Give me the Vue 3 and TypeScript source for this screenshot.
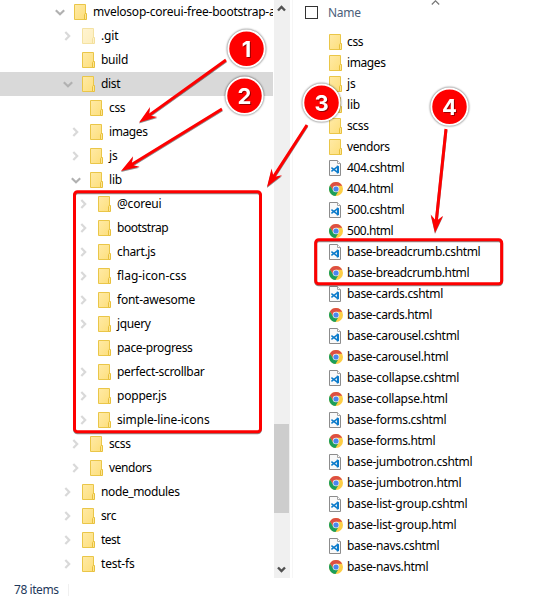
<script setup lang="ts">
type Chevron = 'open' | 'closed' | 'none'

interface TreeNode {
  name: string
  width: number
  level: number
  chevron: Chevron
  faded?: boolean
  selected?: boolean
}

interface FileEntry {
  name: string
  width: number
  kind: 'folder' | 'code' | 'chrome'
}

interface Callout {
  label: number
  x: number
  y: number
  from: [number, number]
  tip: [number, number]
}

const node = (name: string, width: number, level: number, chevron: Chevron = 'closed'): TreeNode => ({
  name,
  width,
  level,
  chevron,
})

const tree: TreeNode[] = [
  node('mvelosop-coreui-free-bootstrap-a', 182.5, 0, 'open'),
  { ...node('.git', 17.5, 1), faded: true },
  node('build', 27, 1, 'none'),
  { ...node('dist', 19.3, 1, 'open'), selected: true },
  node('css', 16.3, 2, 'none'),
  node('images', 38.5, 2),
  node('js', 8.5, 2),
  node('lib', 13, 2, 'open'),
  node('@coreui', 44.5, 3),
  node('bootstrap', 51.3, 3),
  node('chart.js', 38.5, 3),
  node('flag-icon-css', 69.5, 3),
  node('font-awesome', 78, 3),
  node('jquery', 33.5, 3),
  node('pace-progress', 75.5, 3, 'none'),
  node('perfect-scrollbar', 87.5, 3),
  node('popper.js', 49.5, 3),
  node('simple-line-icons', 92.5, 3),
  node('scss', 21.5, 2),
  node('vendors', 42.5, 2),
  node('node_modules', 78.5, 1),
  node('src', 15, 1),
  node('test', 19, 1),
  node('test-fs', 33.5, 1),
]

const folders: [string, number][] = [
  ['css', 16.3], ['images', 38.5], ['js', 8.5], ['lib', 13], ['scss', 21.5], ['vendors', 42.5],
]
const pages: [string, number, number][] = [
  ['404', 57.3, 46.2],
  ['500', 57.3, 46.2],
  ['base-breadcrumb', 133.3, 122.2],
  ['base-cards', 96, 85],
  ['base-carousel', 112.3, 101.3],
  ['base-collapse', 112, 100.5],
  ['base-forms', 99.3, 88.3],
  ['base-jumbotron', 125.3, 114.3],
  ['base-list-group', 120.3, 109.3],
  ['base-navs', 92.3, 81.3],
]

const files: FileEntry[] = [
  ...folders.map(([name, width]): FileEntry => ({ name, width, kind: 'folder' })),
  ...pages.flatMap(([page, codeWidth, htmlWidth]): FileEntry[] => [
    { name: `${page}.cshtml`, width: codeWidth, kind: 'code' },
    { name: `${page}.html`, width: htmlWidth, kind: 'chrome' },
  ]),
]

const callouts: Callout[] = [
  { label: 1, x: 246.5, y: 48.7, from: [226, 60], tip: [139, 122.5] },
  { label: 2, x: 244.5, y: 95.7, from: [222, 109], tip: [121, 171] },
  { label: 3, x: 321.5, y: 102.7, from: [307, 125], tip: [267, 187] },
  { label: 4, x: 449.5, y: 106.7, from: [446, 129], tip: [435, 233] },
]

const ruler = document.createElement('canvas').getContext('2d')!
ruler.font = '12px "Noto Sans", "Open Sans", sans-serif'
const tracking = (text: string, width: number) => ({
  letterSpacing: `${((width - ruler.measureText(text).width) / text.length).toFixed(3)}px`,
})

const angle = (c: Callout) => (Math.atan2(c.tip[1] - c.from[1], c.tip[0] - c.from[0]) * 180) / Math.PI
const reach = (c: Callout) => Math.hypot(c.tip[0] - c.from[0], c.tip[1] - c.from[1])
</script>

<template>
  <div class="explorer">
    <svg class="defs" width="0" height="0">
      <defs>
        <linearGradient id="paper" x1="0" y1="0" x2="1" y2="1">
          <stop offset="0" stop-color="#ffeaa6" />
          <stop offset="1" stop-color="#fddf7c" />
        </linearGradient>
        <symbol id="folder" viewBox="0 0 14 16">
          <path d="M.5 .5H11.5V15.5H.5z" fill="url(#paper)" stroke="#eac648" />
          <path d="M10.5 15.5V10.5L11.2 9.5H12.5V15.5z" fill="#fde694" stroke="#e8c03c" />
        </symbol>
        <symbol id="code" viewBox="0 0 14 16">
          <path d="M.5 .5H8.5L11.5 3.5V15.5H.5z" fill="#f9f9f9" stroke="#8c8c8c" />
          <path d="M8.5 .5V3.5H11.5" fill="#fff" stroke="#a4a4a4" />
          <path d="M2.4 7.7L8.6 12.3M2.4 11.3L8.6 6.7" fill="none" stroke="#0b7bcb" stroke-width="1.5" />
          <path d="M7.9 5.3L10 6.2V12.9L7.9 13.8z" fill="#0b7bcb" />
        </symbol>
        <symbol id="chrome" viewBox="0 0 14 14">
          <circle cx="7" cy="7" r="7" fill="#fdce45" />
          <path d="M7 3.8H13.2A7 7 0 0 0 .94 3.5L4.2 8.6z" fill="#dd4f43" />
          <path d="M.94 3.5A7 7 0 0 0 6.5 14L9.8 8.6L7 10.2L4.2 8.6z" fill="#1b9e5a" />
          <circle cx="7" cy="7" r="3.3" fill="#f1f1f1" />
          <circle cx="7" cy="7" r="2.6" fill="#4a86ee" />
        </symbol>
      </defs>
    </svg>

    <main class="panes">
      <nav class="tree">
        <div
          v-for="(item, i) in tree"
          :key="i"
          class="tree-row"
          :class="[`level-${item.level}`, { selected: item.selected }]"
        >
          <span class="toggle">
            <svg v-if="item.chevron === 'open'" width="10" height="7" viewBox="0 0 10 7">
              <path d="M.8 1.3L5 5.2L9.2 1.3" fill="none" stroke="#b1b1b1" stroke-width="2.2" />
            </svg>
            <svg v-else-if="item.chevron === 'closed'" width="7" height="10" viewBox="0 0 7 10">
              <path d="M1.3 1L5.2 5L1.3 9" fill="none" stroke="#d9d9d9" stroke-width="2.2" />
            </svg>
          </span>
          <svg class="folder" :class="{ faded: item.faded }" width="14" height="16"><use href="#folder" /></svg>
          <span class="label" :style="tracking(item.name, item.width)">{{ item.name }}</span>
        </div>
      </nav>

      <div class="scrollbar">
        <svg class="arrow-up" width="9" height="7" viewBox="0 0 9 7">
          <path d="M1 5.5L4.5 2L8 5.5" fill="none" stroke="#505050" stroke-width="2.4" />
        </svg>
        <div class="thumb"></div>
        <svg class="arrow-down" width="9" height="7" viewBox="0 0 9 7">
          <path d="M1 1.5L4.5 5L8 1.5" fill="none" stroke="#505050" stroke-width="2.4" />
        </svg>
      </div>

      <section class="list">
        <header class="list-head">
          <span class="checkbox"></span>
          <span class="column" :style="tracking('Name', 32.8)">Name</span>
          <svg class="sort" width="9" height="6" viewBox="0 0 9 6">
            <path d="M.8 4.5L4.5 .8L8.2 4.5" fill="none" stroke="#777" stroke-width="1.2" />
          </svg>
        </header>
        <div v-for="file in files" :key="file.name" class="file-row">
          <svg v-if="file.kind === 'chrome'" class="chrome" width="14" height="14"><use href="#chrome" /></svg>
          <svg v-else width="14" height="16"><use :href="`#${file.kind}`" /></svg>
          <span class="label" :style="tracking(file.name, file.width)">{{ file.name }}</span>
        </div>
      </section>
    </main>

    <footer class="status"><span class="count" :style="tracking('78 items', 44.5)">78 items</span></footer>

    <svg class="annotations" width="533" height="601" viewBox="0 0 533 601">
      <g class="marks" fill="none" stroke="#fe0000" stroke-width="3">
        <rect x="74.5" y="191.7" width="186" height="240" rx="3" />
        <rect x="315.7" y="239.7" width="186" height="44" rx="3" />
      </g>
      <g v-for="c in callouts" :key="c.label">
        <g class="marks">
          <g :transform="`translate(${c.tip[0]} ${c.tip[1]}) rotate(${angle(c)})`" fill="#fe0000">
            <path :d="`M${-reach(c)} -1.5H-13.5L-18 -6.2L0 0L-18 6.2L-13.5 1.5H${-reach(c)}z`" />
          </g>
        </g>
        <circle class="disc" :cx="c.x" :cy="c.y" r="18.2" fill="#fe0000" stroke="#fff" stroke-width="1.9" />
        <text class="digit" :x="c.x" :y="c.y + 7.9">{{ c.label }}</text>
      </g>
    </svg>
  </div>
</template>

<style>
body {
  margin: 0;
  background: #fff;
}
</style>

<style scoped>
.explorer {
  position: relative;
  width: 533px;
  height: 601px;
  overflow: hidden;
  display: flex;
  flex-direction: column;
  background: #fff;
  color: #000;
  font: 12px/20px "Noto Sans", "Open Sans", sans-serif;
}
svg {
  display: block;
  flex: none;
}
.defs {
  position: absolute;
}
.panes {
  display: flex;
  height: 578px;
}
.tree {
  width: 273px;
  margin-right: 1px;
  overflow: hidden;
}
.tree-row {
  height: 24px;
  display: flex;
  align-items: center;
  box-sizing: border-box;
}
.level-0 { padding-left: 54px; }
.level-1 { padding-left: 62px; }
.level-2 { padding-left: 70px; }
.level-3 { padding-left: 78px; }
.selected {
  background: #d9d9d9;
}
.toggle {
  width: 11px;
  margin-right: 9px;
  flex: none;
  display: flex;
  justify-content: center;
}
.faded {
  opacity: 0.5;
}
.label {
  margin-left: 5px;
  white-space: nowrap;
}
.scrollbar {
  width: 15px;
  padding-right: 1px;
  display: flex;
  flex-direction: column;
  align-items: center;
  background: #f0f0f0;
}
.arrow-up {
  margin-top: 5px;
}
.thumb {
  width: 15px;
  height: 89px;
  margin-top: 412px;
  background: #cdcdcd;
}
.arrow-down {
  margin-top: 53px;
}
.list {
  flex: 1;
  margin-left: 2px;
  border-left: 1px solid #f6f6f6;
  padding-left: 12px;
}
.list-head {
  height: 31px;
  display: flex;
  align-items: flex-start;
}
.checkbox {
  width: 11px;
  height: 11px;
  margin-top: 6px;
  border: 1px solid #333;
}
.column {
  width: 103px;
  margin: 3px 0 0 10px;
  color: #4c607a;
}
.file-row {
  height: 21px;
  padding-left: 24px;
  display: flex;
  align-items: center;
}
.file-row .label {
  margin-left: 4px;
}
.status {
  display: flex;
  padding: 2px 0 0 14px;
  color: #1e395b;
}
.count {
  width: 54px;
  height: 12px;
  margin-top: 4px;
  line-height: 12px;
  border-right: 1px solid #f0f0f0;
}
.annotations {
  position: absolute;
  inset: 0;
}
.marks {
  filter: drop-shadow(0.5px 1px 0.6px rgba(0, 0, 0, 0.45));
}
.disc {
  filter: drop-shadow(0 0.8px 0.8px rgba(0, 0, 0, 0.7));
}
.digit {
  font: 700 22px Inter, Roboto, sans-serif;
  fill: #fff;
  text-anchor: middle;
  filter: drop-shadow(1px 1px 0.5px rgba(80, 0, 0, 0.6));
}
</style>
